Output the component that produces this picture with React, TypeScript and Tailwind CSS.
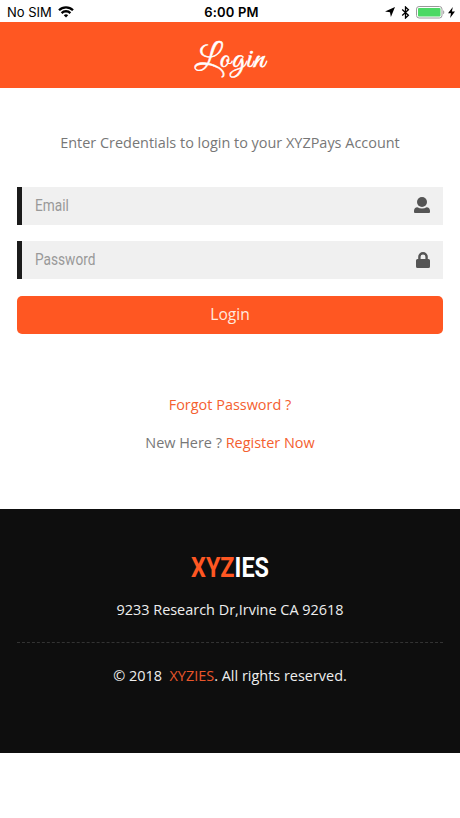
import type { ReactNode } from "react"

function StatusBar() {
  return (
    <div className="grid h-[22px] grid-cols-3 items-center bg-white pl-[7px] pr-[5px] pt-[2px] font-[Inter,sans-serif] text-[13px] leading-5 text-black">
      <div className="flex items-center gap-[6px]">
        <span>No SIM</span>
        <svg width="16" height="12" viewBox="0 0 16 12" fill="none" stroke="currentColor" strokeWidth="2.3">
          <path d="M1 4.3a10 10 0 0 1 14 0" />
          <path d="M3.6 7.1a6.2 6.2 0 0 1 8.8 0" />
          <path d="M8 11.6 5.8 9.3a3.2 3.2 0 0 1 4.4 0Z" fill="currentColor" stroke="none" />
        </svg>
      </div>
      <span className="pl-px text-center font-semibold tracking-[0.15px]">6:00 PM</span>
      <div className="flex items-center justify-end">
        <svg width="10" height="10" viewBox="0 0 10 10" fill="currentColor" className="mr-[6px]">
          <path d="M10 0 5.9 10 5 5.2 0 4.4Z" />
        </svg>
        <svg width="9" height="13" viewBox="0 0 8 13" fill="none" stroke="currentColor" strokeWidth="1.3" className="mr-[6px]">
          <path d="m.7 3.6 6.2 5.6L4 12V1l2.9 2.8L.7 9.4" />
        </svg>
        <svg width="29" height="13" viewBox="0 0 29 13" className="mr-[3px]">
          <rect x=".5" y=".5" width="25.5" height="11.5" rx="2.6" fill="#fff" stroke="#9a9a9a" />
          <rect x="2" y="2" width="22.5" height="8.5" rx="1" fill="#4cd964" />
          <path d="M27.2 4.2c1.5.8 1.5 3.3 0 4.1Z" fill="#9a9a9a" />
        </svg>
        <svg width="7" height="11" viewBox="0 0 7 11" fill="currentColor">
          <path d="M4.8 0 0 6.2h3L2.1 11 7 4.6H3.9Z" />
        </svg>
      </div>
    </div>
  )
}

function Field({ label, children }: { label: string; children: ReactNode }) {
  return (
    <div className="flex h-[37.5px] items-center justify-between border-l-[5px] border-[#1b1b1b] bg-[#f0f0f0] pl-[13px] pr-[13px]">
      <span className="origin-left scale-x-[0.855] font-[Roboto,sans-serif] text-base text-[#999]">{label}</span>
      {children}
    </div>
  )
}

export default function App() {
  return (
    <div className="min-h-[818px] w-[460px] bg-white font-['Open_Sans',sans-serif] text-[14.45px] leading-6 text-[#777]">
      <StatusBar />

      {/* Header */}
      <header className="flex h-[66px] items-center justify-center bg-[#ff5722] pt-[9px]">
        <h1 className="skew-x-6 font-['Great_Vibes',cursive] text-[33px] leading-none tracking-[1.5px] text-white [-webkit-text-stroke:0.5px_white]">
          Login
        </h1>
      </header>

      {/* Login form */}
      <main className="h-[421px] px-[17px] pt-[43px] text-center">
        <p>Enter Credentials to login to your XYZPays Account</p>
        <form className="mt-[32px] flex flex-col gap-[16.8px]">
          <Field label="Email">
            <svg width="16" height="16" viewBox="0 0 16 16" fill="#555" className="mb-px">
              <circle cx="8" cy="5" r="5" />
              <path d="M0 15v-1.2C0 12 1.3 10.4 3.4 10.3c2.7 1.6 6.5 1.6 9.2 0 2.1.1 3.4 1.7 3.4 3.5V15a1 1 0 0 1-1 1H1a1 1 0 0 1-1-1Z" />
            </svg>
          </Field>
          <Field label="Password">
            <svg width="14" height="16" viewBox="0 0 14 16" fill="#555">
              <path d="M12.5 7h-.7V4.8a4.8 4.8 0 0 0-9.6 0V7h-.7A1.5 1.5 0 0 0 0 8.5v6A1.5 1.5 0 0 0 1.5 16h11a1.5 1.5 0 0 0 1.5-1.5v-6A1.5 1.5 0 0 0 12.5 7ZM9.4 7H4.6V4.8a2.4 2.4 0 0 1 4.8 0Z" />
            </svg>
          </Field>
          <button type="button" className="h-[38px] rounded-[5px] bg-[#ff5722] pb-px text-[15.6px] text-[#ffeadf]">
            Login
          </button>
        </form>
        <p className="mt-[59.4px] text-[#f4602f]">Forgot Password ?</p>
        <p className="mt-[14px]">
          New Here ? <span className="text-[#f4602f]">Register Now</span>
        </p>
      </main>

      {/* Footer */}
      <footer className="h-[244px] bg-[#0e0e0e] px-[17px] pt-[43px] text-center text-[#eee]">
        <h2 className="scale-x-[0.835] font-[Roboto,sans-serif] text-[28px] font-bold leading-8 text-white">
          <span className="text-[#ff5722]">XYZ</span>IES
        </h2>
        <p className="mt-[14px]">9233 Research Dr,Irvine CA 92618</p>
        <div className="mt-[20px] border-t border-dashed border-[#333]" />
        <p className="mt-[21px]">
          © 2018 &nbsp;<span className="text-[#e9562b]">XYZIES</span>. All rights reserved.
        </p>
      </footer>
    </div>
  )
}
